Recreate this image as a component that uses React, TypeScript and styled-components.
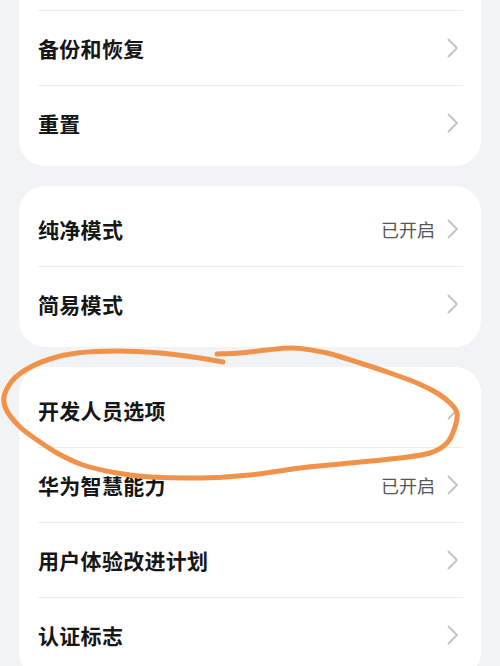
import React from "react";
import styled, { createGlobalStyle } from "styled-components";

const GlobalStyle = createGlobalStyle`
  html, body {
    margin: 0;
    padding: 0;
    background: #f1f3f5;
    overflow: hidden;
  }
  body {
    font-family: "Noto Sans CJK SC", "Noto Sans", sans-serif;
  }
`;

const Page = styled.div`
  position: relative;
  width: 500px;
  height: 666px;
  overflow: hidden;
  background: #f1f3f5;
`;

const List = styled.div`
  display: flex;
  flex-direction: column;
  gap: 20px;
  margin-top: -70px;
  padding: 0 19px;
`;

const Card = styled.div`
  background: #ffffff;
  border-radius: 26px;
  padding: 6px 18px 6px 19px;
`;

const Row = styled.div<{ $first?: boolean }>`
  display: flex;
  align-items: center;
  height: 74px;
  border-top: ${(p) => (p.$first ? "none" : "1px solid #ebebeb")};
`;

const Label = styled.span`
  flex: 1;
  font-size: 21px;
  font-weight: 700;
  color: #161616;
  letter-spacing: 0.3px;
`;

const Value = styled.span`
  font-size: 18px;
  color: #555555;
  margin-right: 12px;
`;

const Chevron = styled.svg`
  width: 12px;
  height: 20px;
  margin-right: 4px;
  flex-shrink: 0;
`;

const Overlay = styled.svg`
  position: absolute;
  left: 0;
  top: 0;
  pointer-events: none;
`;

type Item = { label: string; value?: string };

// the first row of the first card is scrolled above the top edge, only its chevron-less bottom shows
const groups: Item[][] = [
  [{ label: "" }, { label: "备份和恢复" }, { label: "重置" }],
  [{ label: "纯净模式", value: "已开启" }, { label: "简易模式" }],
  [
    { label: "开发人员选项" },
    { label: "华为智慧能力", value: "已开启" },
    { label: "用户体验改进计划" },
    { label: "认证标志" },
  ],
];

const strokeA: [number, number][] = [
  [223, 362], [200, 358], [160, 353], [117, 351], [77, 353], [50, 359],
  [27, 369], [12, 381], [4, 397], [7, 411], [20, 427], [37, 440],
  [57, 453], [83, 465], [117, 473], [150, 477], [200, 478], [250, 475],
  [300, 468], [350, 463], [400, 458], [430, 453], [447, 443], [455, 427],
  [457, 413], [450, 403], [437, 393], [417, 383], [390, 373], [360, 363],
  [327, 353], [293, 348], [267, 350], [240, 353], [217, 354],
];

function smoothPath(pts: [number, number][]) {
  let d = `M${pts[0][0]},${pts[0][1]}`;
  for (let i = 0; i < pts.length - 1; i++) {
    const p0 = pts[i - 1] || pts[i];
    const p1 = pts[i];
    const p2 = pts[i + 1];
    const p3 = pts[i + 2] || p2;
    const c1x = p1[0] + (p2[0] - p0[0]) / 6;
    const c1y = p1[1] + (p2[1] - p0[1]) / 6;
    const c2x = p2[0] - (p3[0] - p1[0]) / 6;
    const c2y = p2[1] - (p3[1] - p1[1]) / 6;
    d += ` C${c1x.toFixed(1)},${c1y.toFixed(1)} ${c2x.toFixed(1)},${c2y.toFixed(1)} ${p2[0]},${p2[1]}`;
  }
  return d;
}

function ChevronIcon() {
  return (
    <Chevron viewBox="0 0 12 20">
      <path d="M1.5 1.5 L10 10 L1.5 18.5" fill="none" stroke="#c2c2c2" strokeWidth="1.8" strokeLinecap="round" strokeLinejoin="round" />
    </Chevron>
  );
}

export default function App() {
  return (
    <Page>
      <GlobalStyle />
      <List>
        {groups.map((items, gi) => (
          <Card key={gi}>
            {items.map((item, i) => (
              <Row key={i} $first={i === 0}>
                <Label>{item.label}</Label>
                {item.value && <Value>{item.value}</Value>}
                <ChevronIcon />
              </Row>
            ))}
          </Card>
        ))}
      </List>
      <Overlay width="500" height="666" viewBox="0 0 500 666">
        <path
          d={smoothPath(strokeA)}
          fill="none"
          stroke="#f0924a"
          strokeWidth="5"
          strokeLinecap="round"
          strokeLinejoin="round"
        />
      </Overlay>
    </Page>
  );
}
